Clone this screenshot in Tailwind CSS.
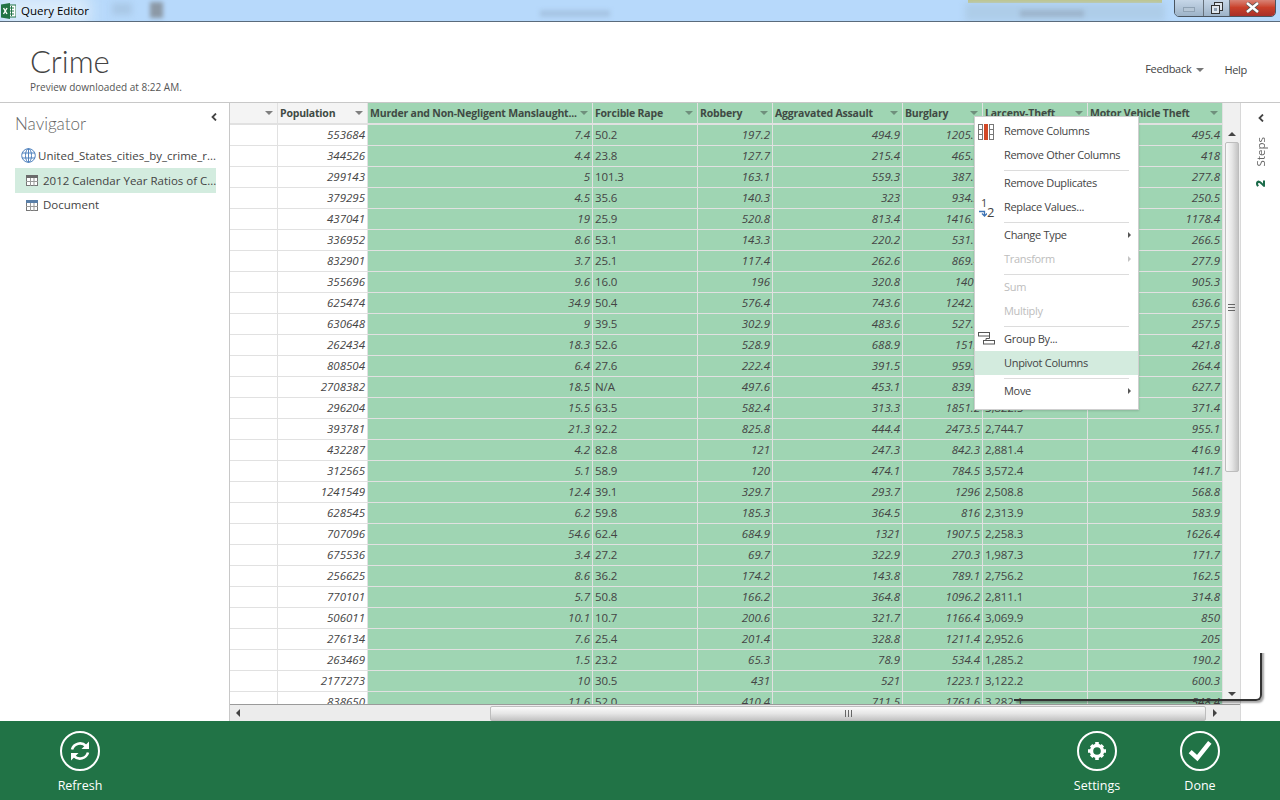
<!DOCTYPE html>
<html>
<head>
<meta charset="utf-8">
<script src="https://cdn.jsdelivr.net/npm/@tailwindcss/browser@4"></script>
</head>
<body class="m-0">
<div class="relative w-[1280px] h-[800px] overflow-hidden flex flex-col bg-white text-[#444] font-['Open_Sans',sans-serif] text-[11px]">

  <!-- title bar -->
  <div class="relative h-[22px] shrink-0 overflow-hidden flex items-center bg-[#b7d9fb] border-b border-[#5a6b7c]">
    <div class="absolute left-[0px] top-[-4px] w-[90px] h-[30px] bg-[#dcecfb] blur-[8px]"></div>
    <div class="absolute left-[112px] top-[3px] w-[20px] h-[12px] bg-[#a9c8e6] blur-[3px]"></div>
    <div class="absolute left-[150px] top-[2px] w-[13px] h-[16px] bg-[#8c99a6] blur-[2px]"></div>
    <div class="absolute left-[540px] top-[10px] w-[70px] h-[7px] bg-[#a7c5e4] blur-[2px]"></div>
    <div class="absolute left-[968px] top-[0px] w-[194px] h-[3px] bg-[#c2c47c] blur-[0.5px]"></div>
    <div class="absolute left-[965px] top-[3px] w-[200px] h-[18px] bg-[#aecde9] blur-[3px]"></div>
    <div class="absolute left-[1020px] top-[10px] w-[64px] h-[7px] bg-[#9db5cd] blur-[2px]"></div>
    <svg class="relative ml-[1px] mr-[5px] shrink-0" width="15" height="16" viewBox="0 0 15 16"><rect x="6" y="2" width="9" height="12" fill="#fff" stroke="#217346"/><path d="M8 5h5M8 8h5M8 11h5M10.500 3v10" stroke="#217346" fill="none"/><path d="M0 1.500 9 0v16L0 14.500z" fill="#217346"/><path d="M2.500 5 6 11M6 5l-3.500 6" stroke="#fff" stroke-width="1.400"/></svg>
    <span class="relative text-[11.500px] text-black">Query Editor</span>
    <div class="absolute right-[4px] top-[-2px] w-[102px] h-[19px] flex rounded-b-[5px] border border-[#4a5560] overflow-hidden">
      <div class="w-[29px] flex items-center justify-center bg-gradient-to-b from-[#c9d9ea] to-[#9db3c8] border-r border-[#66717c]"><div class="mt-[3px] w-[12px] h-[5px] bg-[#b5c6d6] border border-[#8fa2b4]"></div></div>
      <div class="w-[26px] flex items-center justify-center bg-gradient-to-b from-[#c9d9ea] to-[#9db3c8] border-r border-[#66717c]"><svg width="12" height="12" viewBox="0 0 12 12"><rect x="3.500" y="0.500" width="8" height="8" fill="#dfe6ed" stroke="#333"/><rect x="0.500" y="3.500" width="8" height="8" fill="#dfe6ed" stroke="#333"/><rect x="3" y="6" width="3" height="3" fill="#8ea0b2"/></svg></div>
      <div class="flex-1 flex items-center justify-center bg-gradient-to-b from-[#d98a7e] via-[#c9402a] to-[#a8302a]"><svg width="15" height="11" viewBox="0 0 15 11"><path d="M2 1l11 9M13 1 2 10" stroke="#555" stroke-width="4"/><path d="M2 1l11 9M13 1 2 10" stroke="#fff" stroke-width="2.500"/></svg></div>
    </div>
  </div>

  <!-- heading -->
  <div class="h-[81px] shrink-0 flex justify-between border-b border-[#c8c8c8] pl-[30px] pr-[33px]">
    <div class="pt-[19px]">
      <div class="text-[31px] leading-[40px] font-light text-[#444] font-['Lato',sans-serif]">Crime</div>
      <div class="text-[10px] leading-[11px] mt-[1px] text-[#555]">Preview downloaded at 8:22 AM.</div>
    </div>
    <div class="pt-[40px] flex items-start gap-[20px] text-[#444] tracking-[-0.3px]">
      <div class="flex items-center gap-[5px] h-[15px]"><span>Feedback</span><svg width="8" height="4" viewBox="0 0 8 4"><path d="M0 0h8L4 4z" fill="#777"/></svg></div>
      <span class="leading-[15px]">Help</span>
    </div>
  </div>

  <!-- middle -->
  <div class="flex-1 min-h-0 flex">
    <!-- navigator -->
    <div class="w-[230px] shrink-0 border-r border-[#c8c8c8] pl-[15px] pr-[13px]">
      <div class="flex items-center justify-between h-[30px] pt-[12px] pb-[0px] ">
        <span class="text-[17px] font-light text-[#666] font-['Lato',sans-serif]">Navigator</span>
        <svg class="mb-[14px] mr-[-1px]" width="6" height="8" viewBox="0 0 6 8"><path d="M5 0.500 1.500 4 5 7.500" stroke="#444" stroke-width="1.800" fill="none"/></svg>
      </div>
      <div class="mt-[10px] h-[25px] flex items-center gap-[2px] pl-[6px]">
        <svg class="shrink-0" width="15" height="15" viewBox="0 0 15 15" fill="none" stroke="#4f81bd"><circle cx="7.500" cy="7.500" r="6.800"/><ellipse cx="7.500" cy="7.500" rx="3" ry="6.800"/><path d="M1 5h13M1 10h13M7.500 0.700v13.600"/></svg>
        <span class="text-[11.500px] whitespace-nowrap">United_States_cities_by_crime_r...</span>
      </div>
      <div class="h-[25px] flex items-center gap-[5px] pl-[11px] bg-[#d3ecdf]">
        <svg class="shrink-0" width="12" height="11" viewBox="0 0 12 11"><rect x="0.500" y="0.500" width="11" height="10" fill="#fff" stroke="#777"/><rect width="12" height="3" fill="#6b6b6b"/><path d="M0 6.500h12M4.500 3v8M8 3v8" stroke="#999"/></svg>
        <span class="text-[11.500px] whitespace-nowrap">2012 Calendar Year Ratios of C...</span>
      </div>
      <div class="h-[24px] flex items-center gap-[5px] pl-[11px]">
        <svg class="shrink-0" width="12" height="11" viewBox="0 0 12 11"><rect x="0.500" y="0.500" width="11" height="10" fill="#fff" stroke="#777"/><rect width="12" height="3" fill="#5a7fa8"/><path d="M0 6.500h12M4.500 3v8M8 3v8" stroke="#999"/></svg>
        <span class="text-[11.500px]">Document</span>
      </div>
    </div>

    <!-- grid area -->
    <div class="w-[1011px] shrink-0 flex flex-col border-r border-[#d8d8d8]">
      <div class="h-[601px] shrink-0 flex">
        <div class="w-[993px] shrink-0 overflow-hidden">
          <table class="w-[993px] table-fixed border-separate border-spacing-0 text-[11px] leading-[20px] [&_td]:h-[21px] [&_td]:p-0 [&_td]:pr-[2px] [&_td]:pl-[2px] [&_td]:overflow-hidden [&_td]:whitespace-nowrap [&_td]:border-b [&_td]:border-r [&_td]:border-[#e1e1e1] [&_td]:italic [&_td]:text-[11.500px] [&_td]:text-right [&_td:nth-child(n+3)]:bg-[#9fd5b3] [&_td:nth-child(4)]:not-italic [&_td:nth-child(4)]:text-[11.500px] [&_td:nth-child(4)]:tracking-[-0.1px] [&_td:nth-child(4)]:text-left [&_td:nth-child(8)]:not-italic [&_td:nth-child(8)]:text-[11.500px] [&_td:nth-child(8)]:tracking-[-0.1px] [&_td:nth-child(8)]:text-left [&_th]:h-[22px] [&_th]:p-0 [&_th]:border-b-2 [&_th]:border-r [&_th]:border-[#e1e1e1] [&_th]:font-bold [&_th]:text-[10.500px] [&_th]:tracking-[-0.2px] [&_th]:whitespace-nowrap [&_th]:overflow-hidden [&_th]:text-[#3f4a44] [&_th]:text-left [&_th:nth-child(n+3)]:bg-[#9fd5b3]">
            <colgroup><col class="w-[48px]"><col class="w-[90px]"><col class="w-[225px]"><col class="w-[105px]"><col class="w-[75px]"><col class="w-[130px]"><col class="w-[80px]"><col class="w-[105px]"><col class="w-[135px]"></colgroup>
            <thead>
              <tr>
                <th class="bg-[#f4f4f4]"><div class="flex items-center justify-end pr-[4px]"><svg width="8" height="4" viewBox="0 0 8 4"><path d="M0 0h8L4 4z" fill="#7f7f7f"/></svg></div></th>
                <th class="bg-[#f4f4f4]"><div class="flex items-center justify-between pl-[2px] pr-[4px]"><span>Population</span><svg width="8" height="4" viewBox="0 0 8 4"><path d="M0 0h8L4 4z" fill="#7f7f7f"/></svg></div></th>
                <th><div class="flex items-center justify-between pl-[2px] pr-[4px]"><span>Murder and Non-Negligent Manslaught...</span><svg width="8" height="4" viewBox="0 0 8 4"><path d="M0 0h8L4 4z" fill="#6f8f7c"/></svg></div></th>
                <th><div class="flex items-center justify-between pl-[2px] pr-[4px]"><span>Forcible Rape</span><svg width="8" height="4" viewBox="0 0 8 4"><path d="M0 0h8L4 4z" fill="#6f8f7c"/></svg></div></th>
                <th><div class="flex items-center justify-between pl-[2px] pr-[4px]"><span>Robbery</span><svg width="8" height="4" viewBox="0 0 8 4"><path d="M0 0h8L4 4z" fill="#6f8f7c"/></svg></div></th>
                <th><div class="flex items-center justify-between pl-[2px] pr-[4px]"><span>Aggravated Assault</span><svg width="8" height="4" viewBox="0 0 8 4"><path d="M0 0h8L4 4z" fill="#6f8f7c"/></svg></div></th>
                <th><div class="flex items-center justify-between pl-[2px] pr-[4px]"><span>Burglary</span><svg width="8" height="4" viewBox="0 0 8 4"><path d="M0 0h8L4 4z" fill="#6f8f7c"/></svg></div></th>
                <th><div class="flex items-center justify-between pl-[2px] pr-[4px]"><span>Larceny-Theft</span><svg width="8" height="4" viewBox="0 0 8 4"><path d="M0 0h8L4 4z" fill="#6f8f7c"/></svg></div></th>
                <th><div class="flex items-center justify-between pl-[2px] pr-[4px]"><span>Motor Vehicle Theft</span><svg width="8" height="4" viewBox="0 0 8 4"><path d="M0 0h8L4 4z" fill="#6f8f7c"/></svg></div></th>
              </tr>
            </thead>
            <tbody>
              <tr><td></td><td>553684</td><td>7.4</td><td>50.2</td><td>197.2</td><td>494.9</td><td>1205.1</td><td>3,021.4</td><td>495.4</td></tr>
              <tr><td></td><td>344526</td><td>4.4</td><td>23.8</td><td>127.7</td><td>215.4</td><td>465.3</td><td>2,511.2</td><td>418</td></tr>
              <tr><td></td><td>299143</td><td>5</td><td>101.3</td><td>163.1</td><td>559.3</td><td>387.8</td><td>2,204.6</td><td>277.8</td></tr>
              <tr><td></td><td>379295</td><td>4.5</td><td>35.6</td><td>140.3</td><td>323</td><td>934.2</td><td>2,719.5</td><td>250.5</td></tr>
              <tr><td></td><td>437041</td><td>19</td><td>25.9</td><td>520.8</td><td>813.4</td><td>1416.6</td><td>3,108.3</td><td>1178.4</td></tr>
              <tr><td></td><td>336952</td><td>8.6</td><td>53.1</td><td>143.3</td><td>220.2</td><td>531.7</td><td>2,460.1</td><td>266.5</td></tr>
              <tr><td></td><td>832901</td><td>3.7</td><td>25.1</td><td>117.4</td><td>262.6</td><td>869.4</td><td>2,602.8</td><td>277.9</td></tr>
              <tr><td></td><td>355696</td><td>9.6</td><td>16.0</td><td>196</td><td>320.8</td><td>1401</td><td>3,015.2</td><td>905.3</td></tr>
              <tr><td></td><td>625474</td><td>34.9</td><td>50.4</td><td>576.4</td><td>743.6</td><td>1242.5</td><td>2,893.7</td><td>636.6</td></tr>
              <tr><td></td><td>630648</td><td>9</td><td>39.5</td><td>302.9</td><td>483.6</td><td>527.1</td><td>2,377.4</td><td>257.5</td></tr>
              <tr><td></td><td>262434</td><td>18.3</td><td>52.6</td><td>528.9</td><td>688.9</td><td>1512</td><td>3,266.9</td><td>421.8</td></tr>
              <tr><td></td><td>808504</td><td>6.4</td><td>27.6</td><td>222.4</td><td>391.5</td><td>959.6</td><td>2,540.3</td><td>264.4</td></tr>
              <tr><td></td><td>2708382</td><td>18.5</td><td>N/A</td><td>497.6</td><td>453.1</td><td>839.2</td><td>2,128.6</td><td>627.7</td></tr>
              <tr><td></td><td>296204</td><td>15.5</td><td>63.5</td><td>582.4</td><td>313.3</td><td>1851.2</td><td>3,822.5</td><td>371.4</td></tr>
              <tr><td></td><td>393781</td><td>21.3</td><td>92.2</td><td>825.8</td><td>444.4</td><td>2473.5</td><td>2,744.7</td><td>955.1</td></tr>
              <tr><td></td><td>432287</td><td>4.2</td><td>82.8</td><td>121</td><td>247.3</td><td>842.3</td><td>2,881.4</td><td>416.9</td></tr>
              <tr><td></td><td>312565</td><td>5.1</td><td>58.9</td><td>120</td><td>474.1</td><td>784.5</td><td>3,572.4</td><td>141.7</td></tr>
              <tr><td></td><td>1241549</td><td>12.4</td><td>39.1</td><td>329.7</td><td>293.7</td><td>1296</td><td>2,508.8</td><td>568.8</td></tr>
              <tr><td></td><td>628545</td><td>6.2</td><td>59.8</td><td>185.3</td><td>364.5</td><td>816</td><td>2,313.9</td><td>583.9</td></tr>
              <tr><td></td><td>707096</td><td>54.6</td><td>62.4</td><td>684.9</td><td>1321</td><td>1907.5</td><td>2,258.3</td><td>1626.4</td></tr>
              <tr><td></td><td>675536</td><td>3.4</td><td>27.2</td><td>69.7</td><td>322.9</td><td>270.3</td><td>1,987.3</td><td>171.7</td></tr>
              <tr><td></td><td>256625</td><td>8.6</td><td>36.2</td><td>174.2</td><td>143.8</td><td>789.1</td><td>2,756.2</td><td>162.5</td></tr>
              <tr><td></td><td>770101</td><td>5.7</td><td>50.8</td><td>166.2</td><td>364.8</td><td>1096.2</td><td>2,811.1</td><td>314.8</td></tr>
              <tr><td></td><td>506011</td><td>10.1</td><td>10.7</td><td>200.6</td><td>321.7</td><td>1166.4</td><td>3,069.9</td><td>850</td></tr>
              <tr><td></td><td>276134</td><td>7.6</td><td>25.4</td><td>201.4</td><td>328.8</td><td>1211.4</td><td>2,952.6</td><td>205</td></tr>
              <tr><td></td><td>263469</td><td>1.5</td><td>23.2</td><td>65.3</td><td>78.9</td><td>534.4</td><td>1,285.2</td><td>190.2</td></tr>
              <tr><td></td><td>2177273</td><td>10</td><td>30.5</td><td>431</td><td>521</td><td>1223.1</td><td>3,122.2</td><td>600.3</td></tr>
              <tr><td></td><td>838650</td><td>11.6</td><td>52.0</td><td>410.4</td><td>711.5</td><td>1761.6</td><td>3,282.1</td><td>548.4</td></tr>
            </tbody>
          </table>
        </div>
        <!-- vertical scrollbar -->
        <div class="flex-1 flex flex-col items-center bg-[#f0f0f0] pt-[22px]">
          <svg class="mt-[7px]" width="8" height="4" viewBox="0 0 8 4"><path d="M4 0l4 4H0z" fill="#444"/></svg>
          <div class="mt-[6px] w-[14px] h-[330px] rounded-[2px] border border-[#bdbdbd] bg-gradient-to-r from-[#fafafa] via-[#e6e6e6] to-[#c4c4c4] flex items-center justify-center">
            <div class="w-[7px] h-[7px] border-y border-[#666] flex items-center"><div class="w-full h-[1px] bg-[#666]"></div></div>
          </div>
          <svg class="mt-auto mb-[8px]" width="8" height="4" viewBox="0 0 8 4"><path d="M0 0h8L4 4z" fill="#444"/></svg>
        </div>
      </div>
      <!-- horizontal scrollbar -->
      <div class="h-[17px] shrink-0 flex items-center bg-[#ececec] border-t border-[#9a9a9a] pl-[6px]">
        <svg width="4" height="8" viewBox="0 0 4 8"><path d="M4 0v8L0 4z" fill="#444"/></svg>
        <div class="ml-[250px] w-[716px] h-[15px] rounded-[2px] border border-[#bdbdbd] bg-gradient-to-b from-[#fafafa] via-[#e6e6e6] to-[#c4c4c4] flex items-center justify-center">
          <div class="w-[7px] h-[7px] border-x border-[#666] flex justify-center"><div class="h-full w-[1px] bg-[#666]"></div></div>
        </div>
        <svg class="ml-[7px]" width="4" height="8" viewBox="0 0 4 8"><path d="M0 0v8l4-4z" fill="#444"/></svg>
      </div>
    </div>

    <!-- steps panel -->
    <div class="flex-1 flex flex-col items-center pt-[11px]">
      <svg width="6" height="8" viewBox="0 0 6 8"><path d="M5 0.500 1.500 4 5 7.500" stroke="#444" stroke-width="1.800" fill="none"/></svg>
      <span class="mt-[15px] text-[11.500px] text-[#666] [writing-mode:vertical-rl] rotate-180">Steps</span>
      <span class="mt-[14px] text-[12px] font-extrabold text-[#1b6b4a] [writing-mode:vertical-rl] rotate-180">2</span>
    </div>
  </div>

  <!-- footer -->
  <div class="h-[79px] shrink-0 flex bg-[#217346] text-white pl-[40px] pr-[40px] gap-[23px] text-[12.500px]">
    <div class="w-[80px] flex flex-col items-center pt-[10px]">
      <div class="w-[40px] h-[40px] rounded-full border-2 border-white flex items-center justify-center">
        <svg width="22" height="22" viewBox="0 0 22 22" fill="none" stroke="#fff" stroke-width="2.600"><path d="M3 9.500A8.300 8.300 0 0 1 17 6"/><path d="M19 12.500A8.300 8.300 0 0 1 5 16"/><path d="M20 1.500V9h-7.500z" fill="#fff" stroke="none"/><path d="M2 20.500V13h7.500z" fill="#fff" stroke="none"/></svg>
      </div>
      <span class="mt-[6px] leading-[18px]">Refresh</span>
    </div>
    <div class="ml-auto w-[80px] flex flex-col items-center pt-[10px]">
      <div class="w-[40px] h-[40px] rounded-full border-2 border-white flex items-center justify-center">
        <svg width="20" height="20" viewBox="0 0 20 20"><circle cx="10" cy="10" r="5.500" fill="none" stroke="#fff" stroke-width="3.400"/><path d="M8.200 1h3.600v3.500H8.200zM8.200 15.500h3.600V19H8.200zM1 8.200h3.500v3.600H1zM15.500 8.200H19v3.600h-3.500zM2.900 5.500l2.500-2.500 2.500 2.500-2.500 2.500zM12.100 14.500l2.500-2.500 2.500 2.500-2.500 2.500zM2.900 14.500l2.500-2.500 2.500 2.500-2.500 2.500zM12.100 5.500l2.500-2.500 2.500 2.500-2.500 2.500z" fill="#fff"/></svg>
      </div>
      <span class="mt-[6px] leading-[18px]">Settings</span>
    </div>
    <div class="w-[80px] flex flex-col items-center pt-[10px]">
      <div class="w-[40px] h-[40px] rounded-full border-2 border-white flex items-center justify-center">
        <svg width="24" height="22" viewBox="0 0 22 20" fill="none" stroke="#fff" stroke-width="4"><path d="M2 10.500 8.500 16.500 20 2"/></svg>
      </div>
      <span class="mt-[6px] leading-[18px]">Done</span>
    </div>
  </div>

  <!-- stray window edge over the grid -->
  <div class="absolute left-[1014px] top-[640px] w-[248px] h-[61px] border-r-2 border-b-2 border-[#333] rounded-br-[6px] shadow-[2px_2px_2px_rgba(0,0,0,0.35)] [clip-path:inset(13px_-6px_-6px_0)]"></div>

  <!-- context menu -->
  <div class="absolute left-[974px] top-[116px] w-[165px] h-[294px] bg-white border border-[#cfcfcf] shadow-[0_1px_2px_rgba(0,0,0,0.15)] pt-[2px] text-[#444] tracking-[-0.3px]">
    <div class="relative h-[24px] pl-[29px] flex items-center">Remove Columns
      <svg class="absolute left-[3px] top-[5px]" width="16" height="16" viewBox="0 0 16 16"><rect x="0.500" y="0.500" width="4" height="15" fill="#fff" stroke="#777"/><path d="M0 5.500h5M0 10.500h5M11 5.500h5M11 10.500h5" stroke="#777"/><rect x="6" y="0" width="4" height="16" fill="#d24726"/><rect x="11.500" y="0.500" width="4" height="15" fill="none" stroke="#777"/></svg>
    </div>
    <div class="h-[24px] pl-[29px] flex items-center">Remove Other Columns</div>
    <div class="h-[4px] ml-[29px] mr-[9px] border-b border-[#dcdcdc]"></div>
    <div class="h-[24px] pl-[29px] flex items-center">Remove Duplicates</div>
    <div class="relative h-[24px] pl-[29px] flex items-center">Replace Values...
      <span class="absolute left-[6px] top-[1px] text-[11px] leading-[14px] text-[#444]">1</span>
      <span class="absolute left-[12px] top-[9px] text-[13px] leading-[16px] text-[#444]">2</span>
      <svg class="absolute left-[4px] top-[15px]" width="8" height="7" viewBox="0 0 8 7" fill="none" stroke="#3f74b5" stroke-width="1.300"><path d="M0 1.500h5.500v3.500M3 3.500l2.500 2.500L8 3.500"/></svg>
    </div>
    <div class="h-[4px] ml-[29px] mr-[9px] border-b border-[#dcdcdc]"></div>
    <div class="h-[24px] pl-[29px] pr-[7px] flex items-center justify-between">Change Type<svg width="3" height="6" viewBox="0 0 3 6"><path d="M0 0l3 3-3 3z" fill="#555"/></svg></div>
    <div class="h-[24px] pl-[29px] pr-[7px] flex items-center justify-between text-[#bdbdbd]">Transform<svg width="3" height="6" viewBox="0 0 3 6"><path d="M0 0l3 3-3 3z" fill="#c4c4c4"/></svg></div>
    <div class="h-[4px] ml-[29px] mr-[9px] border-b border-[#dcdcdc]"></div>
    <div class="h-[24px] pl-[29px] flex items-center text-[#bdbdbd]">Sum</div>
    <div class="h-[24px] pl-[29px] flex items-center text-[#bdbdbd]">Multiply</div>
    <div class="h-[4px] ml-[29px] mr-[9px] border-b border-[#dcdcdc]"></div>
    <div class="relative h-[24px] pl-[29px] flex items-center">Group By...
      <svg class="absolute left-[3px] top-[5px]" width="17" height="13" viewBox="0 0 17 13" fill="none" stroke="#555"><rect x="0.500" y="0.500" width="11" height="3.500"/><rect x="5.500" y="8.500" width="11" height="3.500"/><path d="M11.500 4v2.500H8V8.500"/></svg>
    </div>
    <div class="h-[24px] pl-[29px] flex items-center bg-[#d3ebde]">Unpivot Columns</div>
    <div class="h-[4px] ml-[29px] mr-[9px] border-b border-[#dcdcdc]"></div>
    <div class="h-[24px] pl-[29px] pr-[7px] flex items-center justify-between">Move<svg width="3" height="6" viewBox="0 0 3 6"><path d="M0 0l3 3-3 3z" fill="#555"/></svg></div>
  </div>
</div>
</body>
</html>
